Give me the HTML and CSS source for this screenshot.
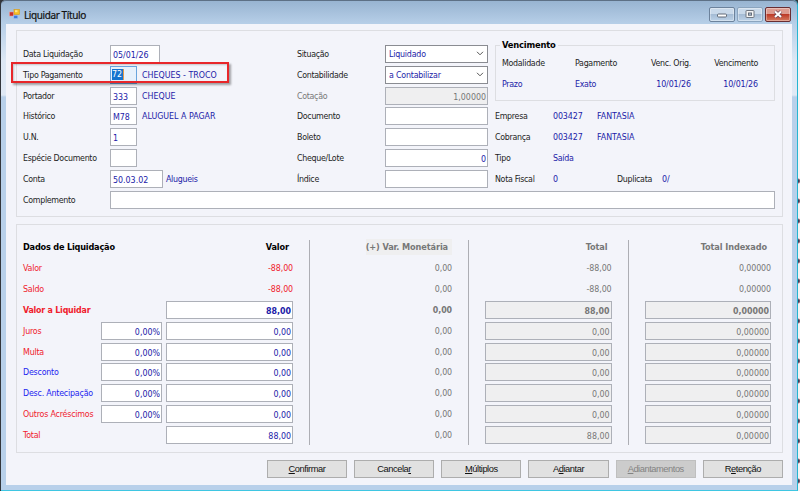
FILE: index.html
```html
<!DOCTYPE html>
<html lang="pt-BR">
<head>
    <meta charset="UTF-8">
    <meta name="viewport" content="width=device-width, initial-scale=1.0">
    <title>Liquidar Título</title>
    <link rel="stylesheet" href="styles.css">
</head>
<body>
    <div class="window">
        <header class="titlebar">
            <svg class="app-icon" width="11" height="10" viewBox="0 0 11 10">
                <rect x="5" y="0.5" width="5.5" height="5" fill="#f5bd24" stroke="#d69a16" stroke-width=".6"/>
                <rect x="6" y="1.2" width="2.5" height="2" fill="#ffe688"/>
                <rect x="0.5" y="3" width="4" height="4" fill="#c9332a" stroke="#f0a09a" stroke-width=".5"/>
                <rect x="4.8" y="6.3" width="4" height="3.2" fill="#3d79dc" stroke="#a4c5f3" stroke-width=".5"/>
            </svg>
            <h1>Liquidar Título</h1>
            <div class="controls">
                <button class="ctl" aria-label="Minimizar"><svg width="24" height="13" viewBox="0 0 24 13"><rect x="7.5" y="6" width="9" height="3" rx="1" fill="#fff" stroke="#626b78"/></svg></button>
                <button class="ctl ctl-max" aria-label="Maximizar"><svg width="24" height="13" viewBox="0 0 24 13"><rect x="8" y="2.5" width="8" height="7" rx=".5" fill="#f4f4f4" stroke="#707884"/><rect x="10.5" y="5" width="3" height="2.2" fill="#b4c5da" stroke="#626b78"/></svg></button>
                <button class="ctl ctl-close" aria-label="Fechar"><svg width="24" height="13" viewBox="0 0 24 13"><path d="M9 3.5l6 5.5M15 3.5l-6 5.5" stroke="#6d4350" stroke-width="3.6"/><path d="M9 3.5l6 5.5M15 3.5l-6 5.5" stroke="#fff" stroke-width="2.1"/></svg></button>
            </div>
        </header>

        <main class="client">
            <form class="group group-form">
                <div class="columns">
                    <div class="col-left">
                        <div class="row"><label>Data Liquidação</label><input class="w-date" value="05/01/26"></div>
                        <div class="row"><label>Tipo Pagamento</label><div class="field selected w-code"><span>72</span></div><b class="desc caps">CHEQUES - TROCO</b></div>
                        <div class="row"><label>Portador</label><input class="w-code" value="333"><b class="desc caps">CHEQUE</b></div>
                        <div class="row"><label>Histórico</label><input class="w-code" value="M78"><b class="desc caps">ALUGUEL A PAGAR</b></div>
                        <div class="row"><label>U.N.</label><input class="w-code" value="1"></div>
                        <div class="row"><label>Espécie Documento</label><input class="w-code"></div>
                        <div class="row"><label>Conta</label><input class="w-conta" value="50.03.02"><b class="desc desc-near">Alugueis</b></div>
                    </div>
                    <div class="col-mid">
                        <div class="row"><label>Situação</label><div class="combo">Liquidado<svg width="8" height="5" viewBox="0 0 8 5"><path d="M1 .8l3 3 3-3" fill="none" stroke="#555"/></svg></div></div>
                        <div class="row"><label>Contabilidade</label><div class="combo">a Contabilizar<svg width="8" height="5" viewBox="0 0 8 5"><path d="M1 .8l3 3 3-3" fill="none" stroke="#555"/></svg></div></div>
                        <div class="row"><label class="muted">Cotação</label><input class="num" value="1,00000" disabled></div>
                        <div class="row"><label>Documento</label><input></div>
                        <div class="row"><label>Boleto</label><input></div>
                        <div class="row"><label>Cheque/Lote</label><input class="num" value="0"></div>
                        <div class="row"><label>Índice</label><input></div>
                    </div>
                    <div class="col-right">
                        <div class="venc">
                            <h2>Vencimento</h2>
                            <div class="venc-grid">
                                <span>Modalidade</span><span>Pagamento</span><span class="right">Venc. Orig.</span><span class="right">Vencimento</span>
                                <b>Prazo</b><b>Exato</b><b class="right digits">10/01/26</b><b class="right digits">10/01/26</b>
                            </div>
                        </div>
                        <div class="row"><label>Empresa</label><b class="code digits">003427</b><b class="caps">FANTASIA</b></div>
                        <div class="row"><label>Cobrança</label><b class="code digits">003427</b><b class="caps">FANTASIA</b></div>
                        <div class="row"><label>Tipo</label><b>Saída</b></div>
                        <div class="row"><label>Nota Fiscal</label><b class="nota">0</b><span class="dup">Duplicata</span><b class="digits">0/</b></div>
                    </div>
                </div>
                <div class="row row-full"><label>Complemento</label><input></div>
            </form>

            <section class="group group-values">
                <div class="names">
                    <div class="row head">Dados de Liquidação</div>
                    <div class="row red">Valor</div>
                    <div class="row red">Saldo</div>
                    <div class="row red strong">Valor a Liquidar</div>
                    <div class="row red">Juros<input class="num" value="0,00%"></div>
                    <div class="row red">Multa<input class="num" value="0,00%"></div>
                    <div class="row blue">Desconto<input class="num" value="0,00%"></div>
                    <div class="row blue">Desc. Antecipação<input class="num" value="0,00%"></div>
                    <div class="row red">Outros Acréscimos<input class="num" value="0,00%"></div>
                    <div class="row red">Total</div>
                </div>
                <div class="amounts">
                    <div class="row head">Valor</div>
                    <div class="row red digits">-88,00</div>
                    <div class="row red digits">-88,00</div>
                    <div class="row"><input class="num strong" value="88,00"></div>
                    <div class="row"><input class="num" value="0,00"></div>
                    <div class="row"><input class="num" value="0,00"></div>
                    <div class="row"><input class="num" value="0,00"></div>
                    <div class="row"><input class="num" value="0,00"></div>
                    <div class="row"><input class="num" value="0,00"></div>
                    <div class="row"><input class="num" value="88,00"></div>
                </div>
                <div class="amounts var muted">
                    <div class="row head"><span>(+) Var. Monetária</span></div>
                    <div class="row digits">0,00</div>
                    <div class="row digits">0,00</div>
                    <div class="row digits strong">0,00</div>
                    <div class="row digits">0,00</div>
                    <div class="row digits">0,00</div>
                    <div class="row digits">0,00</div>
                    <div class="row digits">0,00</div>
                    <div class="row digits">0,00</div>
                    <div class="row digits">0,00</div>
                </div>
                <div class="amounts sum muted">
                    <div class="row head">Total</div>
                    <div class="row digits">-88,00</div>
                    <div class="row digits">-88,00</div>
                    <div class="row"><input class="num strong" value="88,00" disabled></div>
                    <div class="row"><input class="num" value="0,00" disabled></div>
                    <div class="row"><input class="num" value="0,00" disabled></div>
                    <div class="row"><input class="num" value="0,00" disabled></div>
                    <div class="row"><input class="num" value="0,00" disabled></div>
                    <div class="row"><input class="num" value="0,00" disabled></div>
                    <div class="row"><input class="num" value="88,00" disabled></div>
                </div>
                <div class="amounts index muted">
                    <div class="row head">Total Indexado</div>
                    <div class="row digits">0,00000</div>
                    <div class="row digits">0,00000</div>
                    <div class="row"><input class="num strong" value="0,00000" disabled></div>
                    <div class="row"><input class="num" value="0,00000" disabled></div>
                    <div class="row"><input class="num" value="0,00000" disabled></div>
                    <div class="row"><input class="num" value="0,00000" disabled></div>
                    <div class="row"><input class="num" value="0,00000" disabled></div>
                    <div class="row"><input class="num" value="0,00000" disabled></div>
                    <div class="row"><input class="num" value="0,00000" disabled></div>
                </div>
            </section>

            <footer class="actions">
                <button class="btn"><span><u>C</u>onfirmar</span></button>
                <button class="btn"><span>Cancela<u>r</u></span></button>
                <button class="btn"><span><u>M</u>últiplos</span></button>
                <button class="btn"><span>A<u>d</u>iantar</span></button>
                <button class="btn" disabled><span><u>A</u>diantamentos</span></button>
                <button class="btn"><span>R<u>e</u>tenção</span></button>
            </footer>
        </main>
    </div>
    <div class="backdrop"></div>
    <div class="highlight"></div>
</body>
</html>
```
FILE: styles.css
```css
* {
    box-sizing: border-box;
}
body {
    margin: 0;
    width: 800px;
    height: 491px;
    overflow: hidden;
    display: flex;
    position: relative;
    background: #33363c;
    font: 8.8px/12px "DejaVu Sans Condensed", "DejaVu Sans", sans-serif;
    font-stretch: condensed;
    letter-spacing: -0.3px;
    color: #1c1c1c;
}
.window {
    width: 797px;
    height: 491px;
    margin-left: 1px;
    padding: 0 5px;
    border-right: 1px solid #25b5d2;
    border-bottom: 1px solid #3fc6e2;
    border-radius: 5px 5px 0 0;
    background: linear-gradient(#98b4d1 0, #b7cfe8 24px, #dce7f4 60px, #e0e9f5 95px, #b8d0ea 97px, #b8d0ea 100%);
    display: flex;
    flex-direction: column;
}
.backdrop {
    width: 2px;
    background: linear-gradient(#f6f6f6 178px, transparent 178px), radial-gradient(circle at 0 3px, #31425d 1.2px, #c18c98 2.2px, #f4f4f4 3px) 0 178px / 2px 20px;
}

/* title bar */
.titlebar {
    height: 24px;
    margin: 0 -5px;
    padding: 0 6px 0 8px;
    flex: none;
    display: flex;
    align-items: center;
    border-top: 1px solid #5d7085;
    border-radius: 5px 5px 0 0;
    background: linear-gradient(#98b4d1, #b7cfe8);
}
.titlebar h1 {
    margin: 5px 0 0 4px;
    font: 10px/14px "Noto Sans", "Open Sans", sans-serif;
    letter-spacing: -0.4px;
    color: #111;
    -webkit-text-stroke: 0.2px #111;
}
.app-icon {
    margin-top: 3px;
}
.controls {
    margin-left: auto;
    padding-top: 4px;
    display: flex;
    gap: 2px;
}
.ctl {
    width: 26px;
    height: 15px;
    padding: 0;
    border: 1px solid #6c829c;
    border-radius: 2px;
    background: linear-gradient(#c9d9ea 45%, #a5bcd5 50%, #bcd2e8);
    box-shadow: inset 0 0 0 1px rgba(255, 255, 255, 0.35);
}
.ctl svg {
    display: block;
}
.ctl-max {
    border-color: #8ba4be;
}
.ctl-close {
    border-color: #682d32;
    background: linear-gradient(#dd9c91 45%, #bd3b28 50%, #d67b60);
}

/* client area */
.client {
    height: 461px;
    padding: 6px 9px 0 10px;
    background: #f3f4fa;
}
.group {
    border: 1px solid #dddee2;
}
.group-form {
    height: 187px;
    padding: 12.5px 7px 0 6px;
}
.columns {
    display: flex;
}
.col-left {
    width: 274px;
}
.col-mid {
    width: 191px;
    margin-right: 7px;
}
.col-mid label {
    width: 88px;
}
.col-right {
    flex: 1;
}
.row {
    height: 20.85px;
    display: flex;
    align-items: center;
    white-space: nowrap;
}
label {
    width: 87px;
    flex: none;
}
b {
    font-weight: normal;
    color: #1b1ba8;
}
input, .field, .combo {
    height: 18px;
    min-width: 0;
    padding: 2px 1px 0 2px;
    border: 1px solid #adb0b8;
    background: #fff;
    color: #1b1ba8;
    font: inherit;
    letter-spacing: 0;
}
input:disabled {
    background: #efeff0;
    color: #777;
}
.col-mid input, .row-full input {
    flex: 1;
}
.w-date {
    width: 50px;
}
.w-code {
    width: 27px;
}
.w-conta {
    width: 53px;
}
.num {
    text-align: right;
}
.selected {
    padding: 2px 0 0 1px;
    border-color: #6aa5dd;
    background: #e7f1fc;
}
.selected span {
    display: block;
    width: 12px;
    line-height: 11px;
    background: #1474cf;
    color: #fff;
    border-right: 1px solid #e59a48;
}
.desc {
    margin-left: 5px;
}
.desc-near {
    margin-left: 3px;
}
.caps {
    letter-spacing: 0;
}
.digits {
    letter-spacing: -0.1px;
}
.muted {
    color: #777;
}
.red {
    color: #f0202c;
}
.blue {
    color: #1c1cf0;
}
.strong {
    font-weight: bold;
}
.combo {
    flex: 1;
    padding: 0 3px;
    display: flex;
    align-items: center;
    justify-content: space-between;
    border-color: #8a8c92;
    letter-spacing: -0.2px;
}

/* due date box, its title sits on the top border */
.venc {
    height: 56px;
    margin: 1.5px 0 5.05px;
    border: 1px solid #dddee2;
}
.venc h2 {
    width: max-content;
    margin: -7px 0 0 4px;
    padding: 0 2px;
    background: #f3f4fa;
    color: #000;
    font-size: 9.3px;
    line-height: 12px;
    letter-spacing: -0.2px;
}
.venc-grid {
    padding: 1.5px 0 0 6px;
    display: grid;
    grid-template-columns: 73px 43px 73px 67px;
    grid-auto-rows: 20.85px;
    align-items: center;
}
.right {
    text-align: right;
}
.col-right label {
    width: 58px;
}
.code {
    width: 44px;
}
.nota {
    width: 64px;
}
.dup {
    width: 45px;
}

/* settlement values */
.group-values {
    height: 229px;
    margin-top: 7px;
    padding: 12px 10px 0 6px;
    display: flex;
}
.names {
    width: 139px;
    margin-right: 4px;
    flex: none;
    letter-spacing: -0.2px;
}
.names .row {
    justify-content: space-between;
}
.names input {
    width: 61px;
}
.amounts {
    width: 127px;
    flex: none;
}
.amounts .row {
    justify-content: flex-end;
}
.amounts input {
    width: 100%;
}
.head {
    color: #000;
    font-size: 9.1px;
    font-weight: bold;
    letter-spacing: -0.1px;
}
.names .head {
    letter-spacing: -0.2px;
}
.amounts .head {
    padding-right: 4px;
}
.muted .head {
    color: #777;
}
.var, .sum, .index {
    background: linear-gradient(#adaeb4, #adaeb4) 0 3px / 1px 205px no-repeat;
}
.var {
    width: 143px;
    margin-left: 16px;
}
.amounts.var .head {
    padding: 0;
}
.var .head span {
    padding: 2px 4px 2px 0;
    background: #efeff0;
}
.sum {
    width: 143.5px;
    margin-left: 16px;
    padding-left: 17px;
}
.index {
    width: 143.5px;
    margin-left: 16px;
    padding-left: 17px;
}

/* bottom buttons */
.actions {
    margin-top: 7px;
    display: flex;
    justify-content: flex-end;
    gap: 7px;
}
.btn {
    width: 80.2px;
    height: 18px;
    padding: 0;
    border: 1px solid #adadad;
    background: #e1e1e1;
    color: #111;
    font: 9.3px/14px "Liberation Sans", Arial, sans-serif;
    letter-spacing: -0.45px;
}
.btn:disabled {
    background: #cccccc;
    border-color: #bfbfbf;
    color: #838383;
}

/* red marker over the payment type row */
.highlight {
    position: absolute;
    left: 11px;
    top: 62px;
    width: 218px;
    height: 21px;
    border: 2px solid #e8262a;
    box-shadow: 2px 2px 2px rgba(0, 0, 0, 0.35), inset 1px 1px 2px rgba(0, 0, 0, 0.2);
}
```
